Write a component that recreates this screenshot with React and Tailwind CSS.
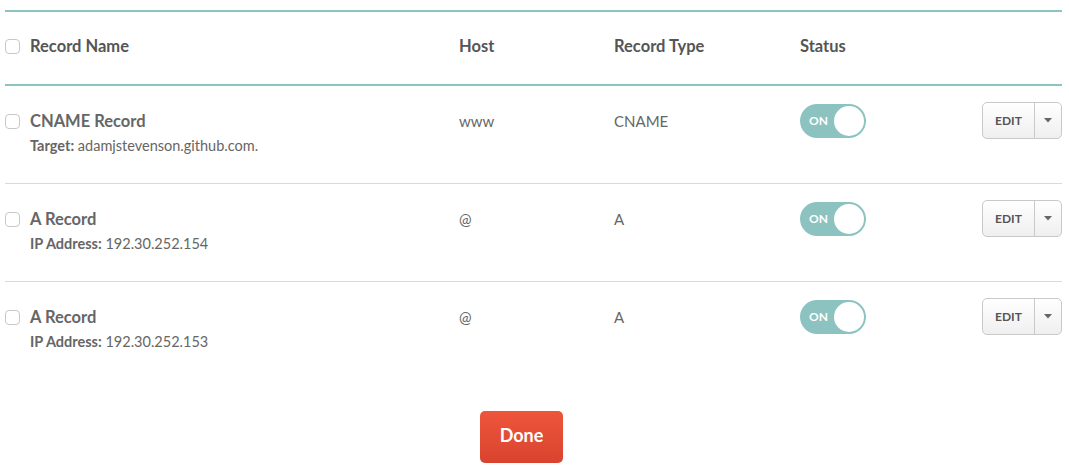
const records = [
  { name: 'CNAME Record', label: 'Target:', value: 'adamjstevenson.github.com.', host: 'www', type: 'CNAME' },
  { name: 'A Record', label: 'IP Address:', value: '192.30.252.154', host: '@', type: 'A' },
  { name: 'A Record', label: 'IP Address:', value: '192.30.252.153', host: '@', type: 'A' },
]

function Checkbox() {
  return <div className="w-[15px] h-[15px] rounded-[4px] border border-[#c8c8c8] bg-white"></div>
}

function Toggle() {
  return (
    <div className="relative w-[66px] h-[34px] rounded-full bg-[#8cc3c1]">
      <span className="absolute left-[9px] top-[9px] text-[12px] leading-[16px] font-bold text-white">ON</span>
      <div className="absolute right-[2px] top-[2px] w-[30px] h-[30px] rounded-full bg-white"></div>
    </div>
  )
}

function EditButton() {
  return (
    <div className="flex w-[80px] h-[37px] rounded-[5px] border border-[#c9c9c9] bg-gradient-to-b from-white to-[#efefef] text-[#555]">
      <div className="w-[52px] flex items-center justify-center text-[12px] font-bold border-r border-[#c9c9c9]">EDIT</div>
      <div className="flex-1 flex items-center justify-center">
        <svg width="8" height="5" viewBox="0 0 8 5"><path d="M0 0h8L4 4.5z" fill="#666" /></svg>
      </div>
    </div>
  )
}

export default function App() {
  return (
    <div className="bg-white w-[1069px] h-[473px] pt-[10px] font-['Lato',sans-serif] text-[#666]">
      <div className="ml-[5px] w-[1057px]">
        {/* header */}
        <div className="grid grid-cols-[25px_429px_155px_186px_182px_80px] items-center h-[76px] pb-[4px] border-y-2 border-[#8cc3c1] text-[16.5px] font-bold text-[#555]">
          <Checkbox />
          <div>Record Name</div>
          <div>Host</div>
          <div>Record Type</div>
          <div>Status</div>
          <div></div>
        </div>

        {records.map((r, i) => (
          <div
            key={i}
            className={`grid grid-cols-[25px_429px_155px_186px_182px_80px] h-[98px] ${i < records.length - 1 ? 'border-b border-[#d9d9d9]' : ''}`}
          >
            <div className="pt-[28px]"><Checkbox /></div>
            <div className="pt-[25px]">
              <div className="text-[16.5px] leading-[20px] font-bold text-[#666]">{r.name}</div>
              <div className="mt-[5px] text-[14.5px] leading-[20px] text-[#666]">
                <span className="font-bold">{r.label}</span> {r.value}
              </div>
            </div>
            <div className="pt-[25px] text-[15px] leading-[20px]">{r.host}</div>
            <div className="pt-[25px] text-[15px] leading-[20px]">{r.type}</div>
            <div className="pt-[18px]"><Toggle /></div>
            <div className="pt-[16px]"><EditButton /></div>
          </div>
        ))}
      </div>

      <div className="flex justify-center mt-[31px] pr-[26px]">
        <button className="w-[83px] h-[52px] pb-[4px] rounded-[5px] bg-gradient-to-b from-[#ee553b] to-[#d9432f] text-white text-[18px] font-bold">
          Done
        </button>
      </div>
    </div>
  )
}
